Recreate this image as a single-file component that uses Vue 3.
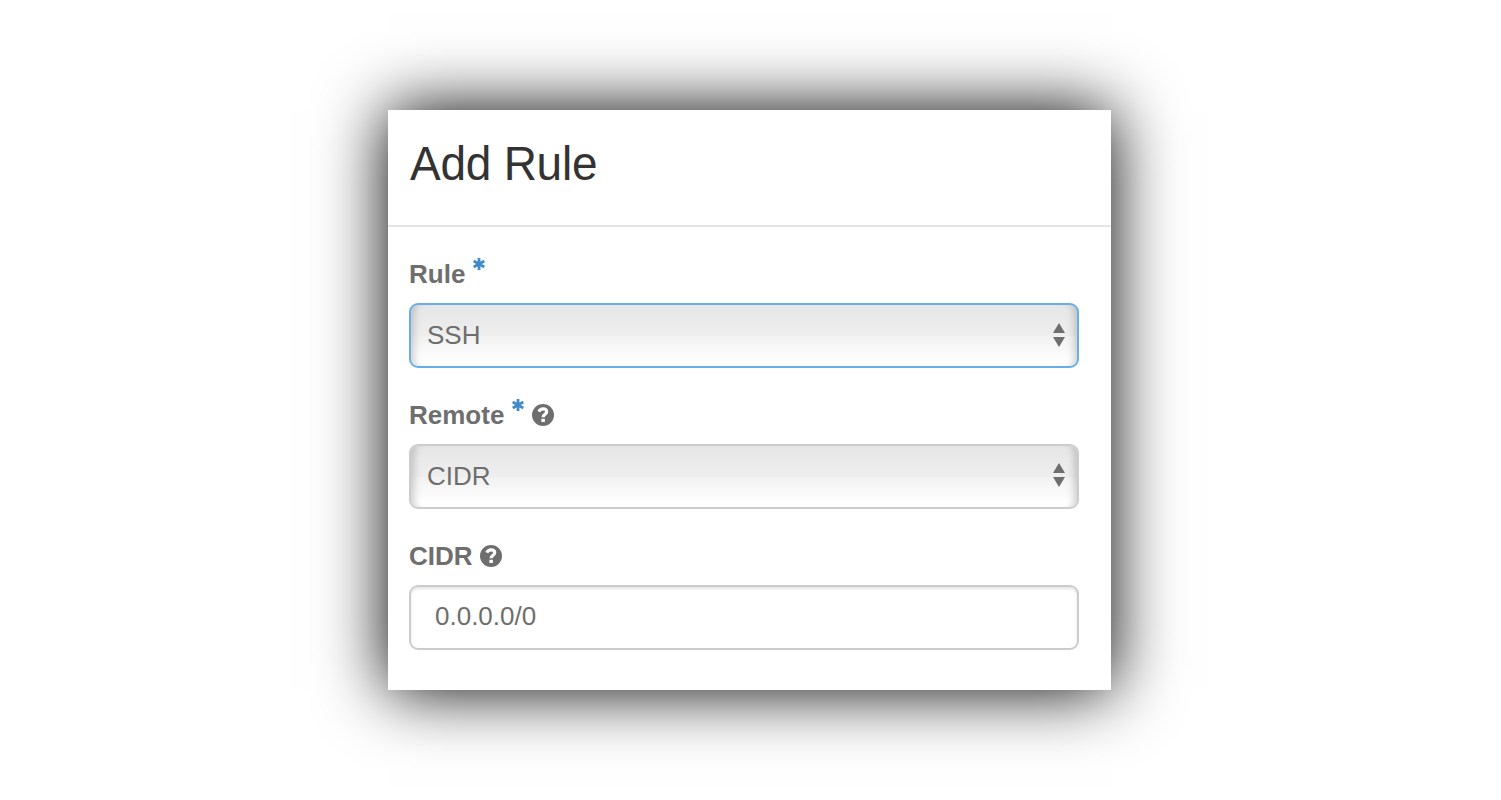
<script setup>
const fields = [
  { id: 'rule', label: 'Rule', required: true, help: false, kind: 'select', value: 'SSH', focused: true },
  { id: 'remote', label: 'Remote', required: true, help: true, kind: 'select', value: 'CIDR', focused: false },
  { id: 'cidr', label: 'CIDR', required: false, help: true, kind: 'input', value: '0.0.0.0/0', focused: false },
]
</script>

<template>
  <main class="page">
    <section class="dialog">
      <header class="header">
        <h1 class="title">Add Rule</h1>
      </header>
      <div class="body">
        <div v-for="field in fields" :key="field.id" class="field">
          <div class="label">
            <span>{{ field.label }}</span>
            <svg v-if="field.required" class="star" viewBox="0 0 12 12">
              <path d="M6 0V12M0.7 3L11.3 9M0.7 9L11.3 3" stroke="#428bca" stroke-width="2.8" fill="none" />
            </svg>
            <svg v-if="field.help" class="help" viewBox="0 0 22 22">
              <circle cx="11" cy="11" r="11" fill="#6e6e6e" />
              <path d="M6.8 7.6C7.8 5.6 9.2 4.9 11 4.9C13.3 4.9 14.7 6.2 14.7 7.8C14.7 10.3 11.1 10.2 11.1 13.2" stroke="#fff" stroke-width="3.2" fill="none" />
              <rect x="9.4" y="14.7" width="3.5" height="3.4" rx="0.3" fill="#fff" />
            </svg>
          </div>
          <div :class="['control', field.kind, { focused: field.focused }]">
            <span class="value">{{ field.value }}</span>
            <svg v-if="field.kind === 'select'" class="arrows" viewBox="0 0 12 24">
              <path d="M6 0L12 10H0ZM0 14H12L6 24Z" fill="#6e6e6e" />
            </svg>
          </div>
        </div>
      </div>
    </section>
  </main>
</template>

<style>
body {
  margin: 0;
  background: #fff;
}
</style>

<style scoped>
.page {
  box-sizing: border-box;
  height: 800px;
  padding: 110px 0 0 388px;
  overflow: hidden;
  background: #fff;
  color: #6e6e6e;
  font-family: "Liberation Sans", Arial, sans-serif;
}
.dialog {
  width: 723px;
  height: 580px;
  background: #fff;
  box-shadow: 0 0 65px #000;
}
.header {
  box-sizing: border-box;
  height: 117px;
  padding: 26px 21px 0 22px;
  border-bottom: 2px solid #e5e5e5;
}
.title {
  margin: 0;
  color: #333;
  font-size: 46px;
  font-weight: 400;
  line-height: 54px;
  letter-spacing: -0.25px;
  transform: scaleY(1.04);
}
.body {
  padding: 28px 32px 0 21px;
}
.field {
  height: 141px;
}
.label {
  display: flex;
  height: 48px;
  font-size: 26px;
  font-weight: 700;
  line-height: 38px;
}
.star {
  width: 12px;
  height: 12px;
  margin: 3px 0 0 8px;
}
.help {
  width: 22px;
  height: 22px;
  margin: 8px 0 0 7.3px;
}
.control {
  box-sizing: border-box;
  display: flex;
  align-items: center;
  justify-content: space-between;
  width: 670px;
  height: 65px;
  border: 2px solid #ccc;
  border-radius: 9px;
  font-size: 26px;
  line-height: 30px;
}
.value {
  margin-bottom: 2px;
}
.select {
  padding: 0 12px 0 16px;
  background: linear-gradient(#e6e6e6, #eeeeee 50%, #f1f1f1 50%, #fff 94%);
  box-shadow: inset 0 0 1px rgba(255, 255, 255, 0.6), inset 10px 0 9px -8px rgba(0, 0, 0, 0.22), inset -10px 0 9px -8px rgba(0, 0, 0, 0.22);
}
.input {
  padding: 0 24px;
  background: #fff;
  box-shadow: inset 0 2px 3px rgba(0, 0, 0, 0.1);
}
.input .value {
  margin-bottom: 3px;
}
.focused {
  border-color: #66afe9;
}
.arrows {
  width: 12px;
  height: 24px;
  margin-bottom: 3px;
}
.focused .arrows {
  margin-bottom: 2px;
}
</style>
